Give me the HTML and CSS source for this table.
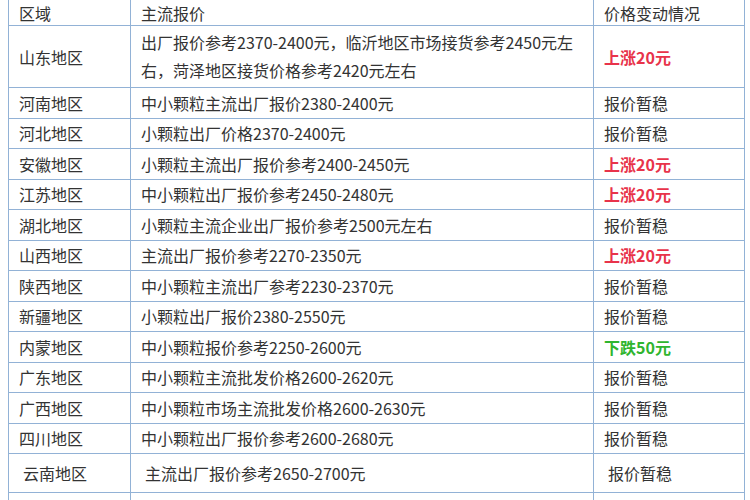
FILE: index.html
```html
<!DOCTYPE html>
<html lang="zh">
<head>
<meta charset="utf-8">
<link rel="stylesheet" href="styles.css">
</head>
<body>
<table class="price">
<colgroup><col class="c1"><col class="c2"><col class="c3"></colgroup>
<tr class="head"><td>区域</td><td>主流报价</td><td>价格变动情况</td></tr>
<tr class="tall"><td>山东地区</td><td class="multi">出厂报价参考2370-2400元，临沂地区市场接货参考2450元左右，菏泽地区接货价格参考2420元左右</td><td class="up">上涨20元</td></tr>
<tr><td>河南地区</td><td>中小颗粒主流出厂报价2380-2400元</td><td>报价暂稳</td></tr>
<tr><td>河北地区</td><td>小颗粒出厂价格2370-2400元</td><td>报价暂稳</td></tr>
<tr><td>安徽地区</td><td>小颗粒主流出厂报价参考2400-2450元</td><td class="up">上涨20元</td></tr>
<tr><td>江苏地区</td><td>中小颗粒出厂报价参考2450-2480元</td><td class="up">上涨20元</td></tr>
<tr><td>湖北地区</td><td>小颗粒主流企业出厂报价参考2500元左右</td><td>报价暂稳</td></tr>
<tr><td>山西地区</td><td>主流出厂报价参考2270-2350元</td><td class="up">上涨20元</td></tr>
<tr><td>陕西地区</td><td>中小颗粒主流出厂参考2230-2370元</td><td>报价暂稳</td></tr>
<tr><td>新疆地区</td><td>小颗粒出厂报价2380-2550元</td><td>报价暂稳</td></tr>
<tr><td>内蒙地区</td><td>中小颗粒报价参考2250-2600元</td><td class="down">下跌50元</td></tr>
<tr><td>广东地区</td><td>中小颗粒主流批发价格2600-2620元</td><td>报价暂稳</td></tr>
<tr><td>广西地区</td><td>中小颗粒市场主流批发价格2600-2630元</td><td>报价暂稳</td></tr>
<tr><td>四川地区</td><td>中小颗粒出厂报价参考2600-2680元</td><td>报价暂稳</td></tr>
<tr class="last"><td>云南地区</td><td>主流出厂报价参考2650-2700元</td><td>报价暂稳</td></tr>
<tr class="tail"><td></td><td></td><td></td></tr>
</table>
</body>
</html>
```
FILE: styles.css
```css
html, body {
  margin: 0;
  padding: 0;
  background: #ffffff;
}
body {
  font-family: "Noto Sans CJK SC", "Noto Sans", sans-serif;
  font-size: 16px;
  color: #333333;
}
.price {
  margin-left: 8px;
  border-collapse: collapse;
  table-layout: fixed;
  width: 736px;
}
.c1 { width: 122px; }
.c2 { width: 463px; }
.c3 { width: 151px; }
.price td {
  border: 1px solid #92b2d6;
  padding: 0 4px 0 10px;
  height: 29.5px;
  line-height: 20px;
  vertical-align: middle;
  white-space: nowrap;
  overflow: hidden;
}
.price tr.head td {
  border-top: none;
  height: 25px;
}
.price tr.tall td {
  height: 59px;
}
.price td.multi {
  white-space: normal;
  line-height: 28px;
  vertical-align: top;
  padding-top: 2px;
}
.price tr.last td {
  height: 38px;
  padding-left: 14px;
}
.price tr.tail td {
  height: 20px;
}
.up {
  color: #e8334a;
  font-weight: bold;
}
.down {
  color: #2fb52f;
  font-weight: bold;
}
```
